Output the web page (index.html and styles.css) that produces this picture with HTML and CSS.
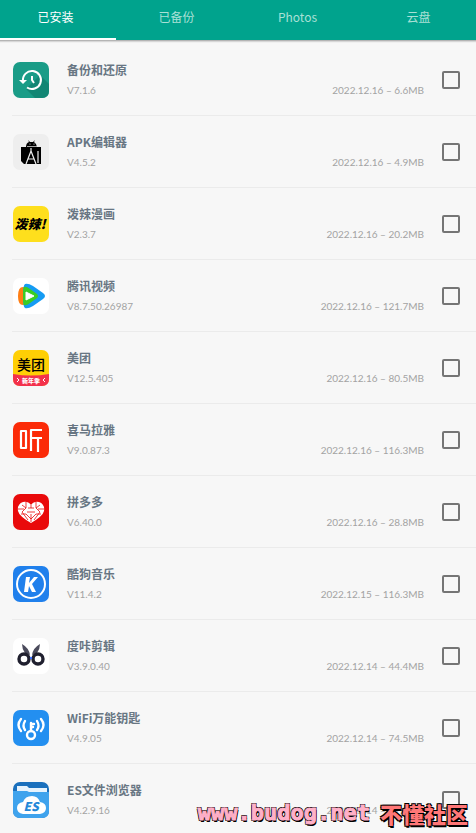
FILE: index.html
```html
<!DOCTYPE html>
<html lang="zh-CN">
<head>
  <meta charset="UTF-8">
  <meta name="viewport" content="width=device-width, initial-scale=1.0">
  <title>备份和还原</title>
  <link rel="stylesheet" href="styles.css">
</head>
<body>
  <nav class="tabs">
    <a href="#installed" class="tab active">已安装</a>
    <a href="#backup" class="tab">已备份</a>
    <a href="#photos" class="tab">Photos</a>
    <a href="#cloud" class="tab">云盘</a>
  </nav>

  <ul class="app-list" id="installed">
    <li class="app">
      <svg class="icon" viewBox="0 0 36 36">
        <rect width="36" height="36" rx="7" fill="#1a9c87"/>
        <path d="M27 13L36 22V29Q36 36 29 36H22L13 27Z" fill="#128674"/>
        <path d="M10 19A9 9 0 1 1 14 25.5" fill="none" stroke="#fff" stroke-width="2"/>
        <path d="M6 18h8l-4 4z" fill="#fff"/>
        <path d="M19 14v4l2 3" fill="none" stroke="#fff" stroke-width="2"/>
      </svg>
      <label class="info" for="app1">
        <span class="name">备份和还原</span>
        <span class="meta"><span>V7.1.6</span><span>2022.12.16 – 6.6MB</span></span>
      </label>
      <input type="checkbox" id="app1">
    </li>
    <li class="app">
      <svg class="icon" viewBox="0 0 36 36">
        <rect width="36" height="36" rx="7" fill="#eeeeee"/>
        <path d="M8 13h5q0-4 3-5l-1-2 2 2h3l2-2-1 2q3 2 3 5h4v17H11l-3-3z" fill="#000"/>
        <path d="M13 30l5-13 5 13M15 25h6M18 14v4M25 17v12" fill="none" stroke="#eee" stroke-width="1.2"/>
        <path d="M14 12.500h10" stroke="#eee" stroke-width="0.7"/>
        <circle cx="17" cy="10" r="0.6" fill="#eee"/>
        <circle cx="21" cy="10" r="0.6" fill="#eee"/>
      </svg>
      <label class="info" for="app2">
        <span class="name">APK编辑器</span>
        <span class="meta"><span>V4.5.2</span><span>2022.12.16 – 4.9MB</span></span>
      </label>
      <input type="checkbox" id="app2">
    </li>
    <li class="app">
      <svg class="icon" viewBox="0 0 36 36">
        <rect width="36" height="36" rx="7" fill="#fedf1d"/>
        <text x="17" y="23" class="logo-text slanted" font-size="13">泼辣!</text>
      </svg>
      <label class="info" for="app3">
        <span class="name">泼辣漫画</span>
        <span class="meta"><span>V2.3.7</span><span>2022.12.16 – 20.2MB</span></span>
      </label>
      <input type="checkbox" id="app3">
    </li>
    <li class="app">
      <svg class="icon" viewBox="0 0 36 36">
        <rect width="36" height="36" rx="7" fill="#fff"/>
        <path d="M11 9q-6-1-6 9t6 9z" fill="#ff7e14"/>
        <path d="M12 6q3-1 8 2l10 7q4 3 0 6l-10 7q-5 3-8 2-2-1-2-12t2-12z" fill="#159bf3"/>
        <path d="M11 9q2-1 6 2l7 5q2 2 0 4l-7 5q-4 3-6 2-1-1-1-9t1-9z" fill="#39ce24"/>
        <path d="M13 14l8 4-8 4z" fill="#fff" stroke="#fff" stroke-linejoin="round"/>
      </svg>
      <label class="info" for="app4">
        <span class="name">腾讯视频</span>
        <span class="meta"><span>V8.7.50.26987</span><span>2022.12.16 – 121.7MB</span></span>
      </label>
      <input type="checkbox" id="app4">
    </li>
    <li class="app">
      <svg class="icon" viewBox="0 0 36 36">
        <rect width="36" height="36" rx="7" fill="#ffcf05"/>
        <path d="M0 24q18 3 36 0v5q0 7-7 7H7q-7 0-7-7z" fill="#f3314c"/>
        <text x="18" y="20" class="logo-text medium" font-size="14">美团</text>
        <text x="18" y="33" class="logo-text light" font-size="6">新年季</text>
        <path d="M4 28l2 2-2 2M32 28l-2 2 2 2" fill="none" stroke="#fff"/>
      </svg>
      <label class="info" for="app5">
        <span class="name">美团</span>
        <span class="meta"><span>V12.5.405</span><span>2022.12.16 – 80.5MB</span></span>
      </label>
      <input type="checkbox" id="app5">
    </li>
    <li class="app">
      <svg class="icon" viewBox="0 0 36 36">
        <rect width="36" height="36" rx="7" fill="#fb2b08"/>
        <path d="M8 9h5v17H8zM29 8H18v21M18 16h11M25 16v14" fill="none" stroke="#fff" stroke-width="2.2" stroke-linejoin="round"/>
      </svg>
      <label class="info" for="app6">
        <span class="name">喜马拉雅</span>
        <span class="meta"><span>V9.0.87.3</span><span>2022.12.16 – 116.3MB</span></span>
      </label>
      <input type="checkbox" id="app6">
    </li>
    <li class="app">
      <svg class="icon" viewBox="0 0 36 36">
        <rect width="36" height="36" rx="7" fill="#e90a0b"/>
        <path d="M18 11q-3-4-8-3-6 2-5 9 1 5 13 12 12-7 13-12 1-7-5-9-5-1-8 3z" fill="#fff"/>
        <path d="M18 11v3M13 8v6l-4 4 6 8M23 8v6l4 4-6 8M5 15h6M25 15h6M15 14h6M14 18h8M18 20v8M8 20h5l5 5 5-5h5M9 11l4 3M27 11l-4 3" fill="none" stroke="#e90a0b" stroke-width="0.8"/>
      </svg>
      <label class="info" for="app7">
        <span class="name">拼多多</span>
        <span class="meta"><span>V6.40.0</span><span>2022.12.16 – 28.8MB</span></span>
      </label>
      <input type="checkbox" id="app7">
    </li>
    <li class="app">
      <svg class="icon" viewBox="0 0 36 36">
        <rect width="36" height="36" rx="7" fill="#2080ec"/>
        <circle cx="18" cy="18" r="14" fill="none" stroke="#fff" stroke-width="2"/>
        <path d="M13 11h4l-1 6 5-6h4l-6 7 4 8h-4l-3-6-1 6h-4z" fill="#fff"/>
      </svg>
      <label class="info" for="app8">
        <span class="name">酷狗音乐</span>
        <span class="meta"><span>V11.4.2</span><span>2022.12.15 – 116.3MB</span></span>
      </label>
      <input type="checkbox" id="app8">
    </li>
    <li class="app">
      <svg class="icon" viewBox="0 0 36 36">
        <rect width="36" height="36" rx="7" fill="#fff"/>
        <path d="M9 6q7 4 8 11l-5-2q-3-4-3-9zM27 6q-7 4-8 11l5-2q3-4 3-9z" fill="#4b4b5c"/>
        <circle cx="11" cy="21" r="5" fill="none" stroke="#20202f" stroke-width="3.4"/>
        <circle cx="25" cy="21" r="5" fill="none" stroke="#20202f" stroke-width="3.4"/>
        <circle cx="18" cy="20" r="1.2" fill="#3a6cff"/>
      </svg>
      <label class="info" for="app9">
        <span class="name">度咔剪辑</span>
        <span class="meta"><span>V3.9.0.40</span><span>2022.12.14 – 44.4MB</span></span>
      </label>
      <input type="checkbox" id="app9">
    </li>
    <li class="app">
      <svg class="icon" viewBox="0 0 36 36">
        <rect width="36" height="36" rx="7" fill="#238ff0"/>
        <g fill="none" stroke="#fff" stroke-width="2.4" stroke-linecap="round">
          <circle cx="18" cy="25" r="4"/>
          <path d="M18 21v-8M18 14h3M18 17h2M12 11q-3 5 0 9M24 11q3 5 0 9M8 9q-5 6 0 12M28 9q5 6 0 12"/>
        </g>
      </svg>
      <label class="info" for="app10">
        <span class="name">WiFi万能钥匙</span>
        <span class="meta"><span>V4.9.05</span><span>2022.12.14 – 74.5MB</span></span>
      </label>
      <input type="checkbox" id="app10">
    </li>
    <li class="app">
      <svg class="icon" viewBox="0 0 36 36">
        <rect width="36" height="36" rx="7" fill="#1a70bd"/>
        <path d="M4 4h10l2 2h18v8H4z" fill="#e6f3fd"/>
        <path d="M0 9h14l2 1h20v19q0 7-7 7H7q-7 0-7-7z" fill="#3fa3ed"/>
        <path d="M10 32q-6-1-6-6t6-6q2-6 9-6 6 0 8 6 6 1 6 6t-6 6z" fill="#fff"/>
        <text x="18" y="29" class="logo-text slanted blue" font-size="12">ES</text>
      </svg>
      <label class="info" for="app11">
        <span class="name">ES文件浏览器</span>
        <span class="meta"><span>V4.2.9.16</span><span>2022.12.14 – 17.4MB</span></span>
      </label>
      <input type="checkbox" id="app11">
    </li>
  </ul>

  <div class="watermark">
    <span class="site">www.budog.net</span>
    <span class="community">不懂社区</span>
  </div>
</body>
</html>
```
FILE: styles.css
```css
* {
  box-sizing: border-box;
}
body {
  font-family: "Noto Sans CJK SC", sans-serif;
  display: flex;
  flex-direction: column;
  height: 100vh;
  margin: 0;
  overflow: hidden;
  background-color: #f7f7f7;
}
/* the strip runs a little past both edges of the screen */
.tabs {
  display: flex;
  flex: none;
  margin: 0 -3px 0 -5px;
  background-color: #00a38d;
  box-shadow: 0 1px 2px rgba(0, 0, 0, 0.4);
}
.tab {
  flex: 1;
  height: 40px;
  border-bottom: 2px solid transparent;
  color: #a9e0d6;
  font-size: 12px;
  line-height: 34px;
  text-align: center;
  text-decoration: none;
}
.tab.active {
  border-color: #ffffff;
  color: #ffffff;
}
.app-list {
  flex: 1;
  margin: 0;
  padding: 4px 0 0 12px;
  overflow-y: auto;
  scrollbar-width: none;
  list-style: none;
}
.app {
  display: flex;
  align-items: center;
  gap: 18px;
  height: 72px;
  padding: 0 16px 0 1px;
  border-bottom: 1px solid #ebebeb;
}
.icon {
  flex: none;
  width: 36px;
  height: 36px;
}
.info {
  flex: 1;
  padding-top: 1px;
}
.name {
  display: block;
  color: #687683;
  font-size: 12px;
  font-weight: bold;
  line-height: 20px;
}
.meta {
  display: flex;
  justify-content: space-between;
  color: #a3a3a3;
  font-family: Lato, sans-serif;
  font-size: 10px;
  line-height: 20px;
}
input[type="checkbox"] {
  appearance: none;
  width: 18px;
  height: 18px;
  margin: 0;
  border: 2px solid #757575;
  border-radius: 2px;
}
input[type="checkbox"]:checked {
  background-color: #00a38d;
}
.logo-text {
  font-weight: 900;
  text-anchor: middle;
}
.slanted {
  font-style: italic;
}
.medium {
  font-weight: 500;
}
.light {
  fill: #ffffff;
}
.blue {
  fill: #2387d8;
}
.watermark {
  position: absolute;
  right: 8px;
  bottom: 4px;
  display: flex;
  gap: 10px;
  align-items: center;
  font-size: 22px;
  font-weight: 900;
  line-height: 32px;
  pointer-events: none;
  text-shadow: -1px -1px 0 #000000, 1px -1px 0 #000000, -1px 1px 0 #000000, 1px 2px 0 #000000;
}
.site {
  color: #ffb0c8;
  font-family: "DejaVu Sans Mono", monospace;
  -webkit-text-stroke: 1px #ffb0c8;
}
.community {
  color: #ff7777;
}
```
